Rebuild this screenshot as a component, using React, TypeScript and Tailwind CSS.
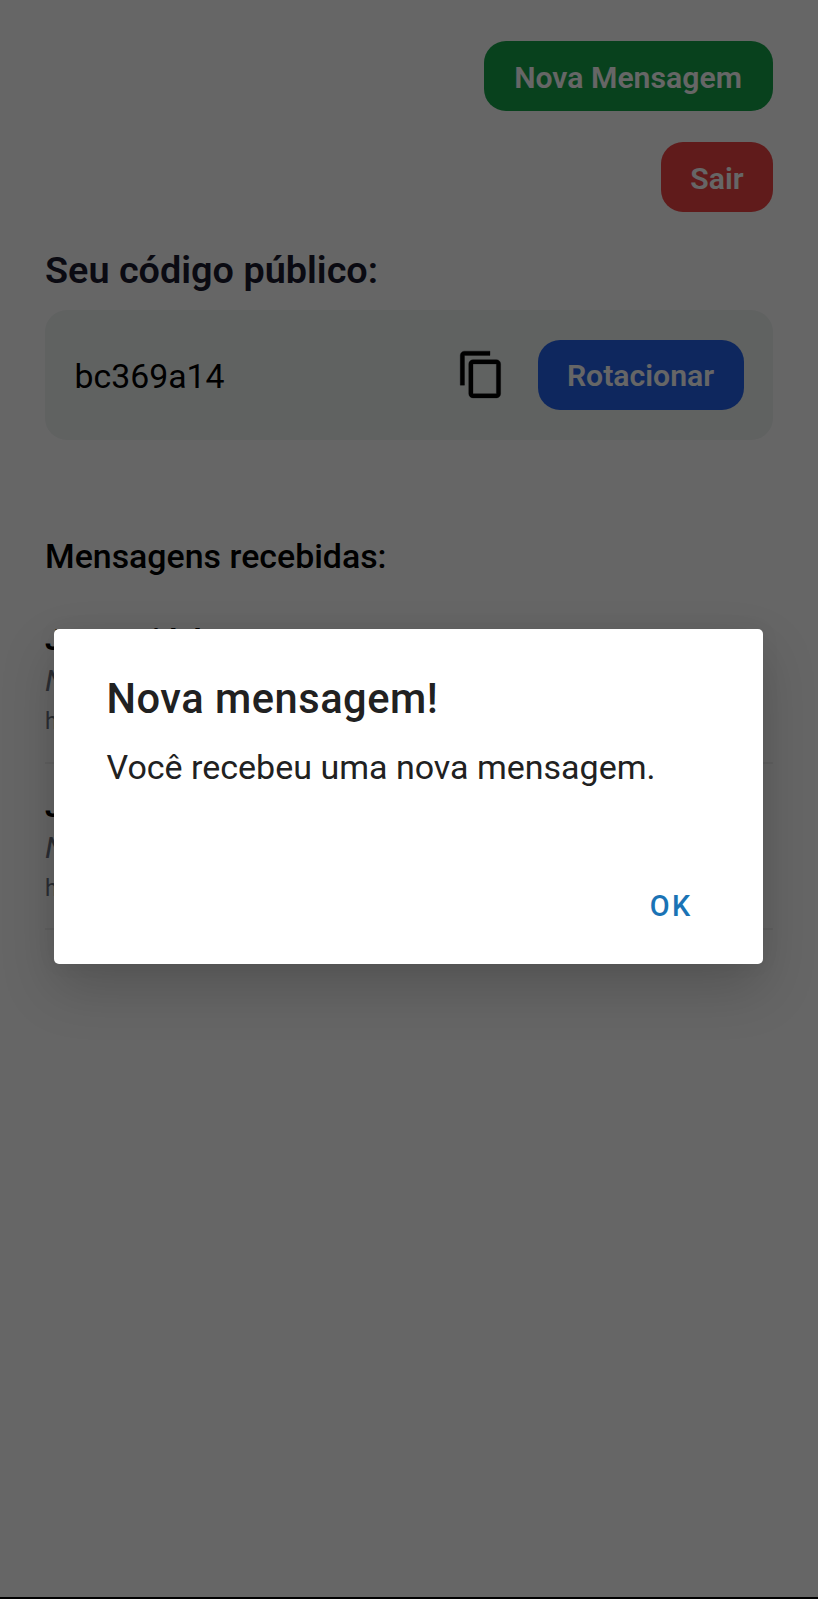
import type { ReactNode } from "react";

type Message = { id: number; sender: string; subject: string; time: string };

const messages: Message[] = [
  { id: 1, sender: "Jonas Fidel", subject: "Nova mensagem", time: "hoje" },
  { id: 2, sender: "Jonas Fidel", subject: "Nova mensagem", time: "hoje" },
];

function Button({ className, children }: { className: string; children: ReactNode }) {
  return (
    <button
      className={`flex h-[70px] shrink-0 items-center justify-center rounded-[22px] text-[30.2px] font-semibold leading-none text-white ${className}`}
    >
      {children}
    </button>
  );
}

function CopyIcon() {
  return (
    <svg
      viewBox="0 0 24 24"
      className="mb-[1px] size-[51px] shrink-0"
      fill="#000"
      stroke="#000"
      strokeWidth="0.15"
      strokeLinejoin="round"
    >
      <path d="M16 1H4c-1.1 0-2 .9-2 2v14h2V3h12V1zm3 4H8c-1.1 0-2 .9-2 2v14c0 1.1.9 2 2 2h11c1.1 0 2-.9 2-2V7c0-1.1-.9-2-2-2zm0 16H8V7h11v14z" />
    </svg>
  );
}

function MessageItem({ sender, subject, time }: Message) {
  return (
    <li className="flex h-[166.6px] flex-col border-b-2 border-[#f0f0f0] pt-[23px]">
      <span className="text-[30.3px] leading-[40px] font-bold text-black">{sender}</span>
      <span className="text-[30.3px] leading-[42px] text-[#6b7280] italic">{subject}</span>
      <span className="text-[23px] leading-[40px] text-[#6b7280]">{time}</span>
    </li>
  );
}

function Dialog() {
  return (
    <div
      role="dialog"
      className="flex h-[335px] w-[709px] flex-col rounded-[5px] bg-white pl-[52.5px] text-[#212121] shadow-[0_24px_54px_rgba(0,0,0,0.18),0_0_20px_rgba(0,0,0,0.05)]"
    >
      <h2 className="mt-[45px] text-[41.6px] leading-[50px] font-medium tracking-[0.52px]">Nova mensagem!</h2>
      <p className="mt-[22px] text-[34px] leading-[42px]">Você recebeu uma nova mensagem.</p>
      <button className="mt-auto mr-[70.5px] mb-[37px] self-end text-[28.8px] leading-[42px] font-medium tracking-[2.4px] text-[#1a73b5]">
        OK
      </button>
    </div>
  );
}

export default function App() {
  return (
    <div className="relative flex h-[1599px] w-[818px] flex-col overflow-hidden bg-white font-[Roboto,sans-serif]">
      <main className="flex flex-1 flex-col px-[45px] pt-[41px]">
        <div className="flex flex-col items-end gap-[31px]">
          <Button className="w-[289px] bg-[#16a34a] pt-[5px] pr-[1px]">Nova Mensagem</Button>
          <Button className="w-[112px] bg-[#ef4444] pt-[5px]">Sair</Button>
        </div>

        <h1 className="mt-[34px] text-[37.8px] leading-[48px] font-semibold text-[#1a1a2e]">Seu código público:</h1>
        <section className="mt-[16px] flex h-[130px] items-center rounded-[22px] bg-[#f0f4f3] px-[29.5px]">
          <span className="flex-1 pt-[4px] text-[33.8px] leading-[40px] text-black">bc369a14</span>
          <CopyIcon />
          <Button className="ml-[31px] w-[206px] bg-[#2563eb] pt-[3px]">Rotacionar</Button>
        </section>

        <h2 className="mt-[97px] text-[33.9px] leading-[40px] font-medium text-black">Mensagens recebidas:</h2>
        <ul className="mt-[20px]">
          {messages.map((m) => (
            <MessageItem key={m.id} {...m} />
          ))}
        </ul>
      </main>
      <div className="h-[2px] bg-black" />

      <div className="absolute inset-0 flex items-start justify-center bg-black/60 pt-[629px] pr-[1px]">
        <Dialog />
      </div>
    </div>
  );
}
